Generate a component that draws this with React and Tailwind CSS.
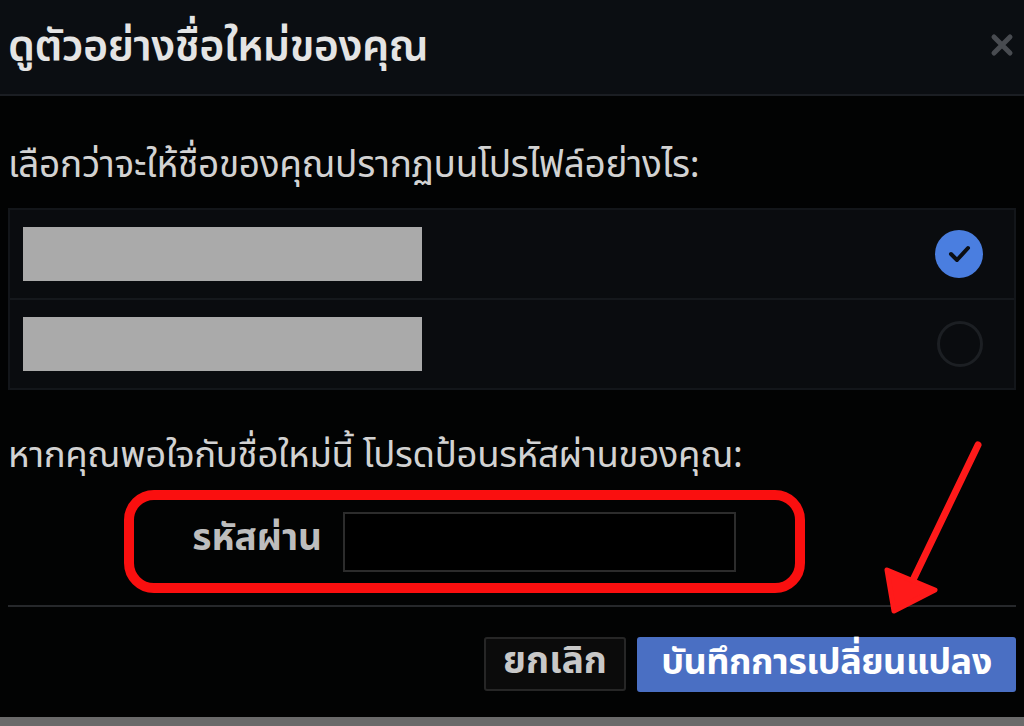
import React from 'react';

const thai = { fontFamily: '"Noto Sans Thai", "Noto Sans", "Liberation Sans", sans-serif' };

function Option({ checked }) {
  return (
    <div className="flex items-center justify-between h-[88px] pl-[13px] pr-[31px]">
      <div className="w-[399px] h-[54px] bg-[#aaaaaa]" />
      {checked ? (
        <div className="w-[48px] h-[48px] rounded-full bg-[#4a7ee0] flex items-center justify-center">
          <svg width="24" height="20" viewBox="0 0 24 20">
            <path d="M4 10 L10 16 L21 4" fill="none" stroke="#0b0e14" strokeWidth="4" strokeLinecap="round" strokeLinejoin="round" />
          </svg>
        </div>
      ) : (
        <div className="w-[46px] h-[46px] rounded-full border-[3px] border-[#1c1f23]" />
      )}
    </div>
  );
}

export default function App() {
  return (
    <div className="relative w-[1024px] h-[726px] bg-[#020303] flex flex-col overflow-hidden" style={thai}>
      <div className="h-[96px] shrink-0 bg-[#0b0e12] border-b-2 border-[#1b1e23] flex items-center justify-between pl-[8px] pr-[10px]">
        <h1 className="text-[43px] font-semibold text-[#e4e4e4] leading-none pb-[2px] tracking-[-0.5px]">ดูตัวอย่างชื่อใหม่ของคุณ</h1>
        <svg width="24" height="24" viewBox="0 0 24 24" className="mb-[4px]">
          <path d="M4 4 L20 20 M20 4 L4 20" stroke="#484b50" strokeWidth="5" strokeLinecap="round" />
        </svg>
      </div>

      <div className="flex flex-col px-[8px]">
        <p className="mt-[50px] text-[37px] text-[#d2d2d2] leading-[40px] tracking-[-0.3px] whitespace-nowrap">เลือกว่าจะให้ชื่อของคุณปรากฏบนโปรไฟล์อย่างไร:</p>

        <div className="mt-[22px] bg-[#0a0c0f] border-2 border-[#13161a] flex flex-col">
          <Option checked />
          <div className="h-[2px] bg-[#15181c]" />
          <Option />
        </div>

        <p className="mt-[46px] text-[36.5px] text-[#d2d2d2] leading-[40px] tracking-[-0.3px] whitespace-nowrap">หากคุณพอใจกับชื่อใหม่นี้ โปรดป้อนรหัสผ่านของคุณ:</p>

        <div className="ml-[116px] mt-[14px] w-[681px] h-[103px] rounded-[30px] border-[10px] border-[#fa0f0f] flex items-center">
          <span className="w-[188px] text-right text-[37px] font-bold text-[#bdbdbd] leading-none pb-[4px]">รหัสผ่าน</span>
          <div className="ml-[21px] w-[393px] h-[60px] border-2 border-[#2c2c2c] bg-black" />
        </div>

        <div className="mt-[12px] h-[2px] bg-[#26282b]" />

        <div className="mt-[30px] flex justify-end gap-[11px]">
          <button className="w-[142px] h-[54px] bg-[#0b0b0b] border-2 border-[#262626] rounded-[3px] text-[37px] font-bold text-[#c8c8c8] leading-none pb-[4px]">ยกเลิก</button>
          <button className="w-[379px] h-[55px] bg-[#4a6fc3] rounded-[3px] text-[36px] font-bold text-white leading-none pb-[4px] tracking-[-0.5px] whitespace-nowrap">บันทึกการเปลี่ยนแปลง</button>
        </div>
      </div>

      <div className="mt-auto h-[9px] bg-[#6a6a6a]" />

      <svg className="absolute left-0 top-0 pointer-events-none" width="1024" height="726">
        <line x1="978" y1="445" x2="913" y2="580" stroke="#ff1a1a" strokeWidth="7" strokeLinecap="round" />
        <polygon points="894,611 887,570 935,590" fill="#ff1a1a" stroke="#ff1a1a" strokeWidth="5" strokeLinejoin="round" />
      </svg>
    </div>
  );
}
